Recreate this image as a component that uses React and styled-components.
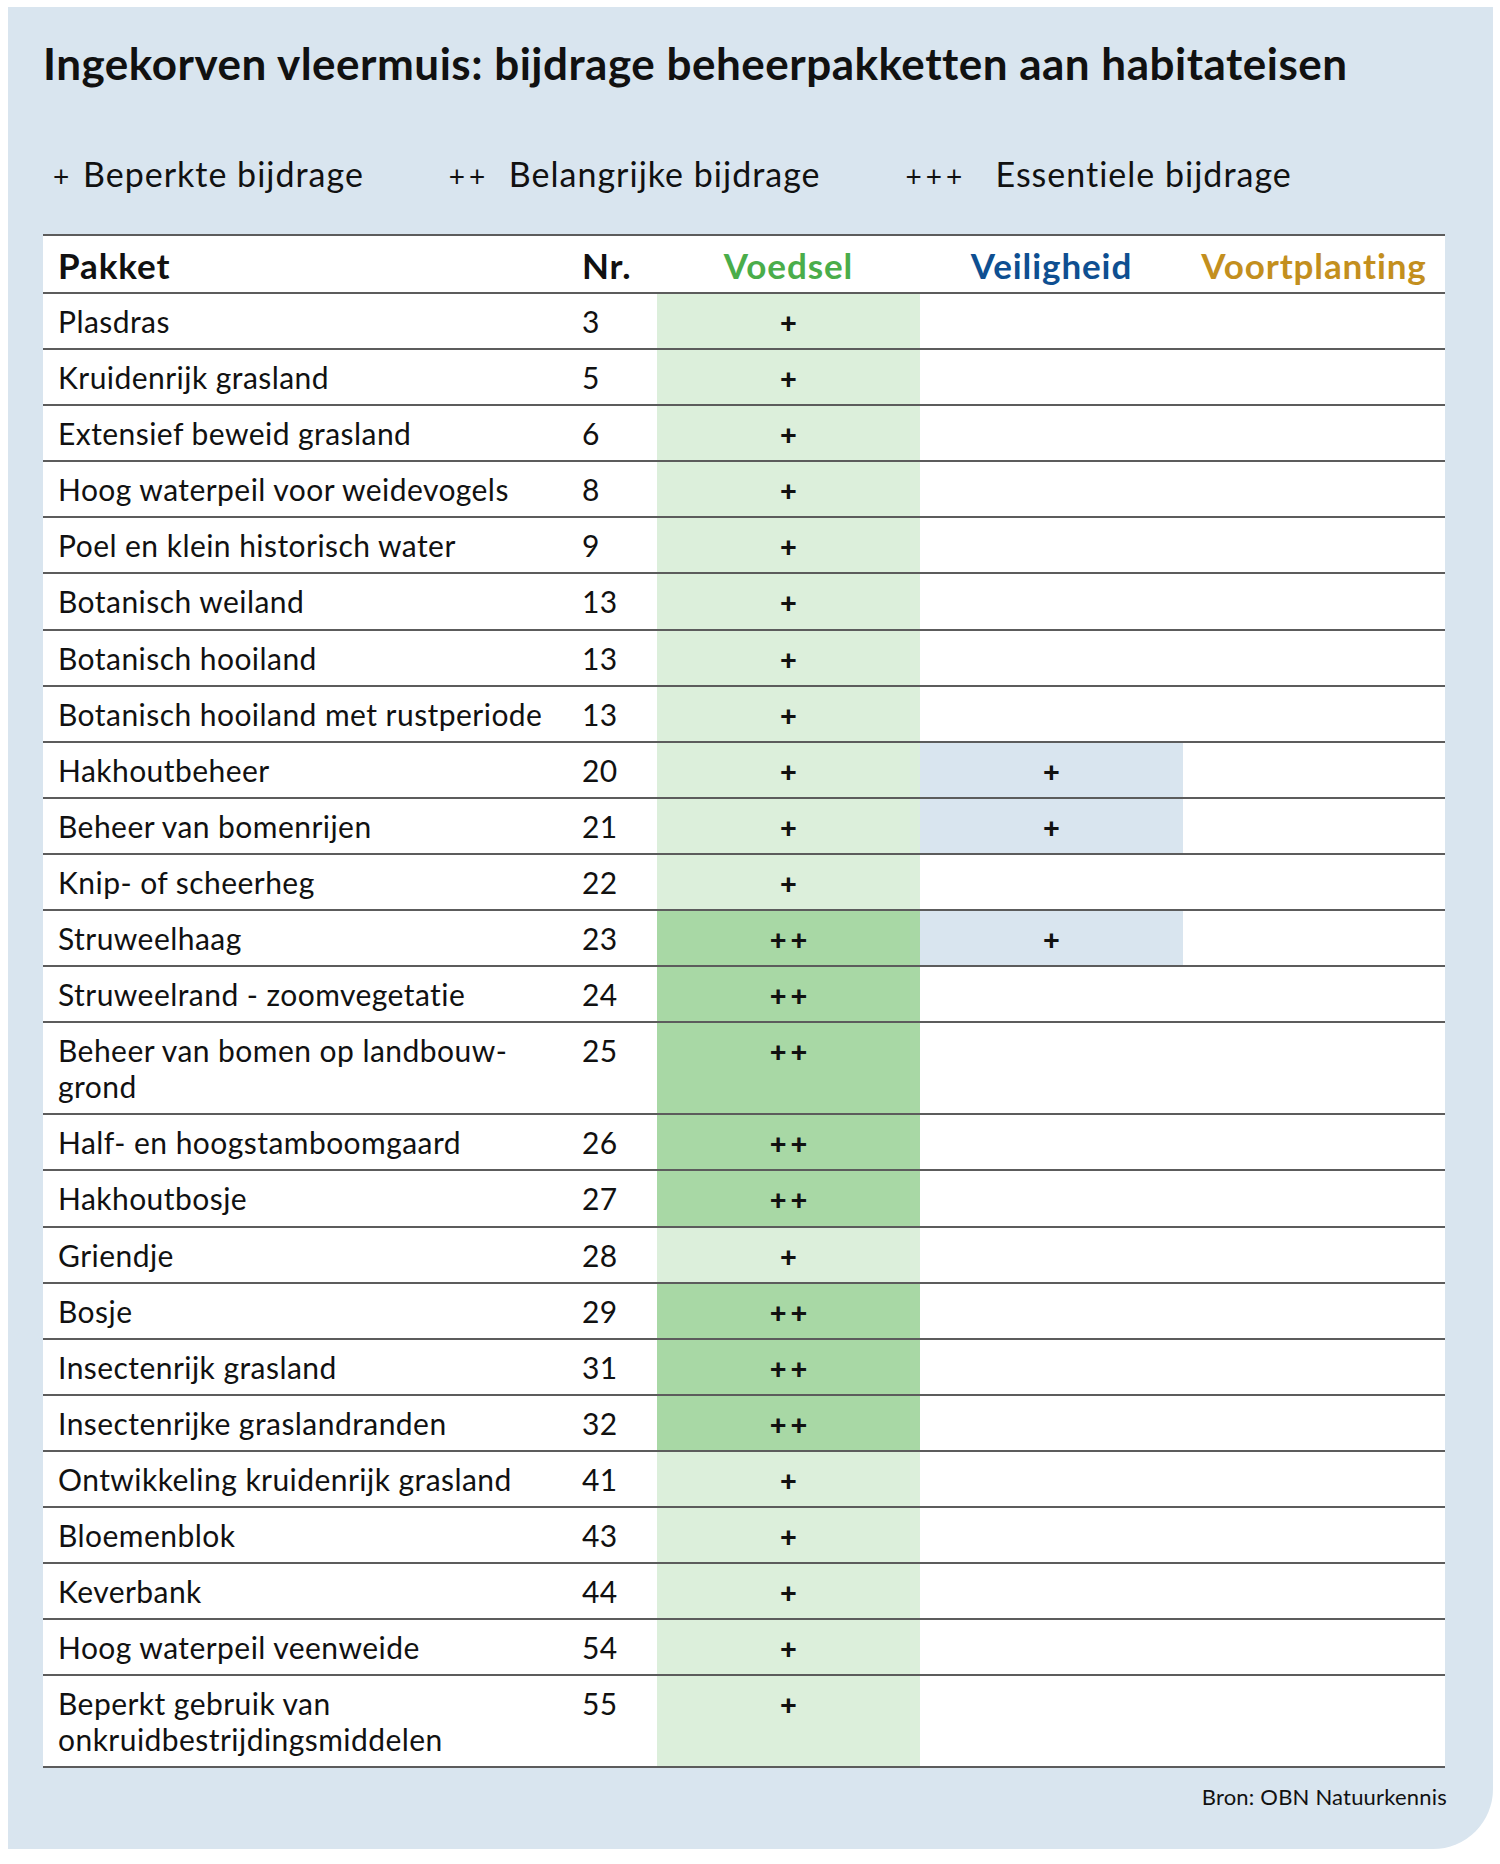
import React from 'react';
import styled, { createGlobalStyle } from 'styled-components';

const GlobalStyle = createGlobalStyle`
  body {
    margin: 0;
    background: #ffffff;
    font-family: Lato, "Liberation Sans", sans-serif;
    color: #111111;
  }
`;

const Panel = styled.div`
  margin: 7px 0 0 8px;
  width: 1485px;
  box-sizing: border-box;
  background: #d9e5ef;
  border-bottom-right-radius: 60px;
  padding: 31px 48px 40px 35px;
`;

const Title = styled.h1`
  margin: 0;
  font-size: 44px;
  line-height: 50px;
  font-weight: 700;
  letter-spacing: 0.5px;
  color: #111111;
`;

const Legend = styled.div`
  display: flex;
  gap: 85px;
  margin: 67px 0 39px 10px;
  font-size: 34px;
  line-height: 38px;
  letter-spacing: 1px;
`;

const LegendItem = styled.div`
  display: flex;
  align-items: baseline;
`;

const LegendMarks = styled.span`
  display: inline-block;
  width: ${(p) => p.$count * 30}px;
  font-size: 28px;
  letter-spacing: 4px;
`;

const Table = styled.div`
  background: #ffffff;
  border-top: 2px solid #5c5c5c;
`;

const Row = styled.div`
  display: grid;
  grid-template-columns: 527px 87px 263px 263px 1fr;
  border-bottom: 2px solid #5c5c5c;
`;

const HeadCell = styled.div`
  padding: 11px 0 9px ${(p) => (p.$center ? 0 : p.$pad || 15)}px;
  text-align: ${(p) => (p.$center ? 'center' : 'left')};
  font-size: 35px;
  line-height: 36px;
  font-weight: 700;
  letter-spacing: 0.9px;
  color: ${(p) => p.$color || '#111111'};
`;

const Cell = styled.div`
  padding: 9px 0 9.1px ${(p) => p.$pad || 15}px;
  font-size: 30px;
  line-height: 36px;
  letter-spacing: 0.45px;
  background: ${(p) => p.$bg || 'transparent'};
`;

const MarkCell = styled.div`
  display: flex;
  justify-content: center;
  padding-top: 9px;
  font-size: 29px;
  line-height: 38px;
  font-weight: 900;
  word-spacing: -3px;
  background: ${(p) => p.$bg || 'transparent'};
`;

const Source = styled.div`
  margin: 16px -2px 0 0;
  text-align: right;
  font-size: 22px;
  line-height: 25px;
  letter-spacing: 0.2px;
`;

const rows = [
  ['Plasdras', '3', '+', ''],
  ['Kruidenrijk grasland', '5', '+', ''],
  ['Extensief beweid grasland', '6', '+', ''],
  ['Hoog waterpeil voor weidevogels', '8', '+', ''],
  ['Poel en klein historisch water', '9', '+', ''],
  ['Botanisch weiland', '13', '+', ''],
  ['Botanisch hooiland', '13', '+', ''],
  ['Botanisch hooiland met rustperiode', '13', '+', ''],
  ['Hakhoutbeheer', '20', '+', '+'],
  ['Beheer van bomenrijen', '21', '+', '+'],
  ['Knip- of scheerheg', '22', '+', ''],
  ['Struweelhaag', '23', '++', '+'],
  ['Struweelrand - zoomvegetatie', '24', '++', ''],
  [['Beheer van bomen op landbouw-', 'grond'], '25', '++', ''],
  ['Half- en hoogstamboomgaard', '26', '++', ''],
  ['Hakhoutbosje', '27', '++', ''],
  ['Griendje', '28', '+', ''],
  ['Bosje', '29', '++', ''],
  ['Insectenrijk grasland', '31', '++', ''],
  ['Insectenrijke graslandranden', '32', '++', ''],
  ['Ontwikkeling kruidenrijk grasland', '41', '+', ''],
  ['Bloemenblok', '43', '+', ''],
  ['Keverbank', '44', '+', ''],
  ['Hoog waterpeil veenweide', '54', '+', ''],
  [['Beperkt gebruik van', 'onkruidbestrijdingsmiddelen'], '55', '+', ''],
];

const greenFor = (v) => (v === '++' ? '#a8d8a5' : '#dcefdb');
const marks = (v) => v.split('').join(' ');

const legend = [
  [1, 'Beperkte bijdrage'],
  [2, 'Belangrijke bijdrage'],
  [3, 'Essentiele bijdrage'],
];

const App = () => (
  <>
    <GlobalStyle />
    <Panel>
      <Title>Ingekorven vleermuis: bijdrage beheerpakketten aan habitateisen</Title>

      <Legend>
        {legend.map(([n, label]) => (
          <LegendItem key={label}>
            <LegendMarks $count={n}>{'+'.repeat(n)}</LegendMarks>
            {label}
          </LegendItem>
        ))}
      </Legend>

      <Table>
        <Row>
          <HeadCell>Pakket</HeadCell>
          <HeadCell $pad={12}>Nr.</HeadCell>
          <HeadCell $center $color="#4aad4a">Voedsel</HeadCell>
          <HeadCell $center $color="#0e4f91">Veiligheid</HeadCell>
          <HeadCell $center $color="#c38f1e">Voortplanting</HeadCell>
        </Row>
        {rows.map(([name, nr, food, safe], i) => (
          <Row key={i}>
            <Cell>
              {Array.isArray(name) ? (
                <>
                  {name[0]}
                  <br />
                  {name[1]}
                </>
              ) : (
                name
              )}
            </Cell>
            <Cell $pad={12}>{nr}</Cell>
            <MarkCell $bg={greenFor(food)}>{marks(food)}</MarkCell>
            <MarkCell $bg={safe ? '#d9e5ef' : undefined}>{marks(safe)}</MarkCell>
            <MarkCell />
          </Row>
        ))}
      </Table>

      <Source>Bron: OBN Natuurkennis</Source>
    </Panel>
  </>
);

export default App;
